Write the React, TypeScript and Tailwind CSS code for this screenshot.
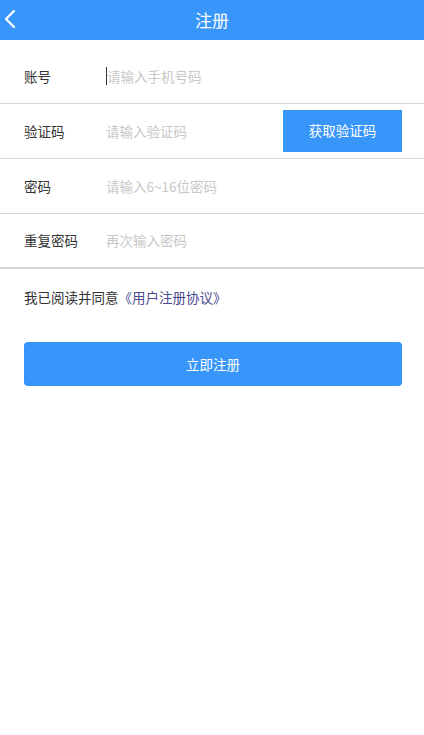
import React from "react"

const font = { fontFamily: '"Noto Sans CJK SC", "Noto Sans", sans-serif' }

function Row({ label, placeholder, cursor, children, last }: { label: string; placeholder: string; cursor?: boolean; children?: React.ReactNode; last?: boolean }) {
  return (
    <div className={`flex items-center h-[55px] pl-6 pr-[22px] ${last ? "border-b-2 border-[#d6d6d6]" : "border-b border-[#d6d6d6]"}`}>
      <div className="w-[82px] text-[13.5px] text-[#333333]">{label}</div>
      <div className="flex-1 flex items-center text-[13.5px] text-[#c8c8c8]">
        {cursor && <span className="w-px h-[18px] bg-[#333333]" />}
        {placeholder}
      </div>
      {children}
    </div>
  )
}

export default function App() {
  return (
    <div className="w-[424px] h-[735px] bg-white" style={font}>
      {/* header */}
      <div className="relative h-10 bg-[#3895fa] flex items-center justify-center">
        <svg className="absolute left-[3px] top-[9px]" width="14" height="20" viewBox="0 0 14 20" fill="none">
          <path d="M11 2 L3 10 L11 18" stroke="white" strokeWidth="2.2" strokeLinecap="round" strokeLinejoin="round" />
        </svg>
        <span className="text-white text-[17px]">注册</span>
      </div>

      <div className="pt-[9px]">
        <Row label="账号" placeholder="请输入手机号码" cursor />
        <Row label="验证码" placeholder="请输入验证码">
          <button className="w-[119px] h-[42px] bg-[#3895fa] text-white text-[13.5px] -mt-px">获取验证码</button>
        </Row>
        <Row label="密码" placeholder="请输入6~16位密码" />
        <Row label="重复密码" placeholder="再次输入密码" last />
      </div>

      <div className="pl-6 pt-[18px] text-[13.5px] text-[#333333]">
        我已阅读并同意<span className="text-[#4b4a8f]">《用户注册协议》</span>
      </div>

      <div className="pl-6 pr-[22px] mt-[35px]">
        <button className="w-full h-[44px] rounded bg-[#3895fa] text-white text-[13.5px]">立即注册</button>
      </div>
    </div>
  )
}
